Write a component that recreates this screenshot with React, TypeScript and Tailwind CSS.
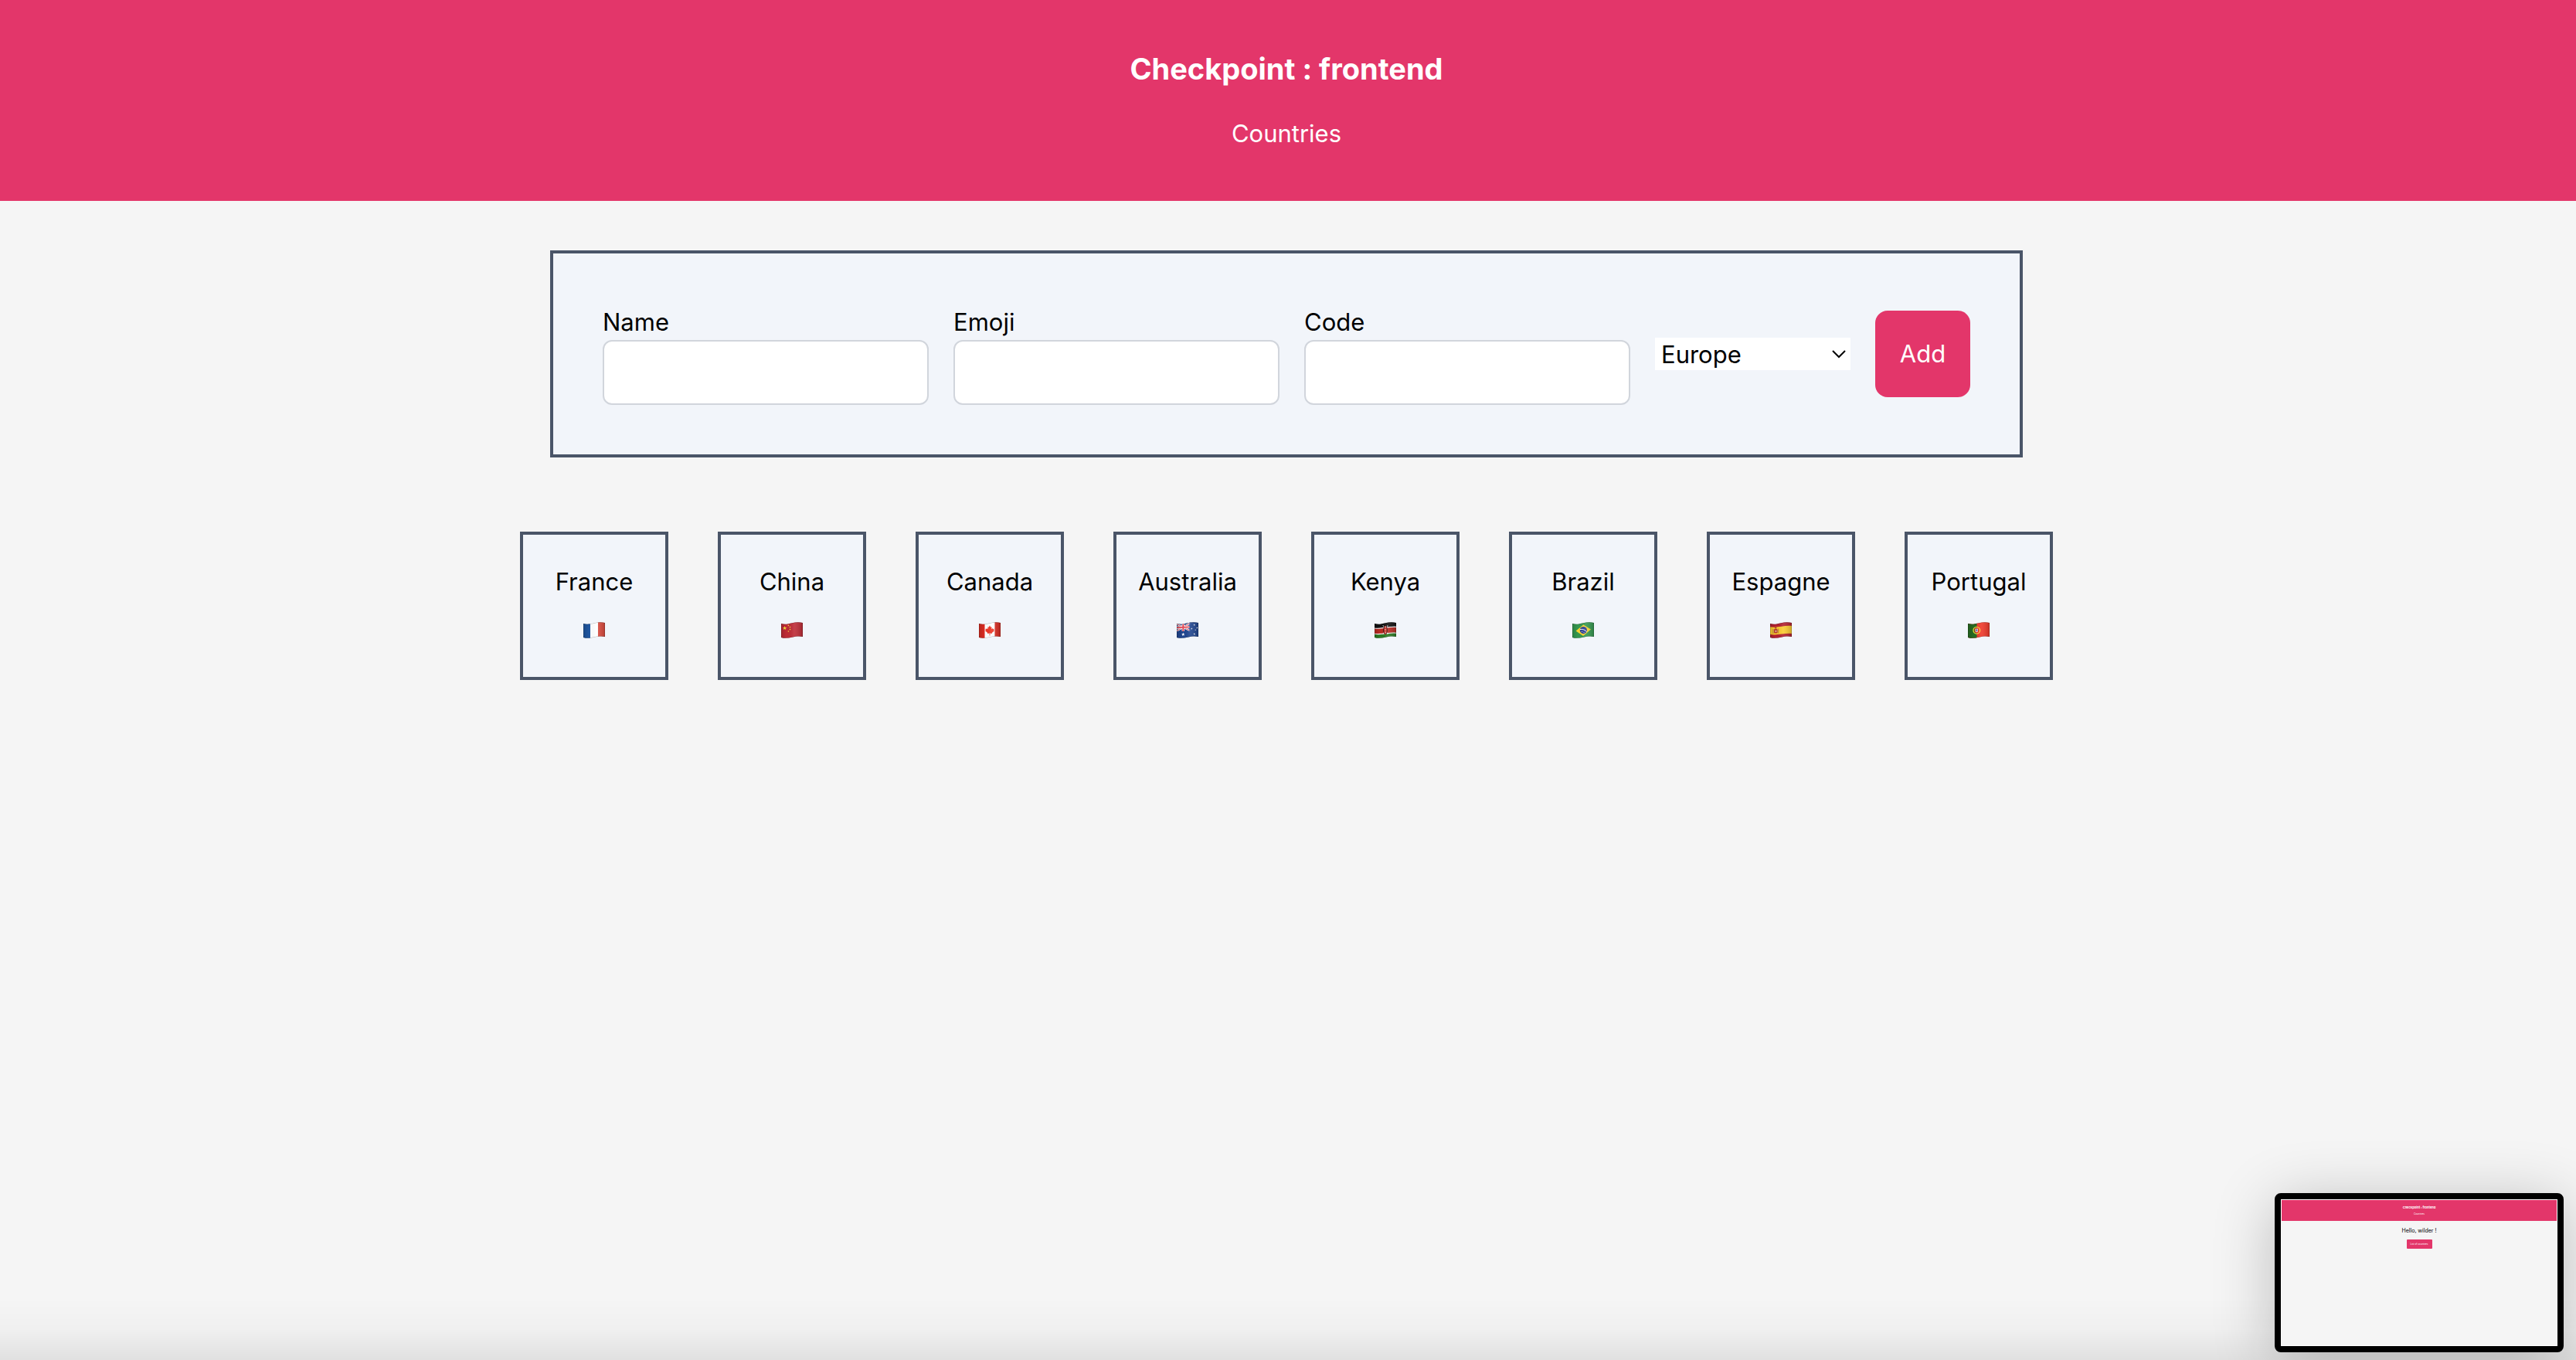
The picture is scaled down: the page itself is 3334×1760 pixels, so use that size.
import { type ReactNode } from "react";

type CountryItem = { name: string; flag: ReactNode };

const STAR = "M0-1 .24-.32 .95-.31 .38 .12 .59 .81 0 .4-.59 .81-.38 .12-.95-.31-.24-.32Z";

/* Outline of a waving flag, 28 x 21 */
const WAVE = "M0 2 C5 3.5 9 2.5 14 1.2 C19 0 24 0 28 1 V19 C24 18 19 18.5 14 19.8 C9 21 4 21.3 0 20 Z";

function Flag({ id, label, children }: { id: string; label: string; children: ReactNode }) {
  return (
    <svg role="img" aria-label={label} width="28" height="21" viewBox="0 0 28 21">
      <defs>
        <clipPath id={id + "-wave"}>
          <path d={WAVE} />
        </clipPath>
        <linearGradient id={id + "-shade"}>
          <stop offset="0" stopColor="#000" stopOpacity=".15" />
          <stop offset=".25" stopColor="#000" stopOpacity="0" />
          <stop offset=".6" stopColor="#fff" stopOpacity=".1" />
          <stop offset="1" stopColor="#000" stopOpacity=".18" />
        </linearGradient>
      </defs>
      <g clipPath={"url(#" + id + "-wave)"}>
        {children}
        <rect width="28" height="21" fill={"url(#" + id + "-shade)"} />
        <path d={WAVE} fill="none" stroke="#000" strokeOpacity=".3" strokeWidth="1" />
      </g>
    </svg>
  );
}

const countries: CountryItem[] = [
  {
    name: "France",
    flag: (
      <Flag id="fr" label="Flag of France">
        <rect width="9" height="21" fill="#1f56a0" />
        <rect x="9" width="10" height="21" fill="#fff" />
        <rect x="19" width="9" height="21" fill="#dc4a3d" />
      </Flag>
    ),
  },
  {
    name: "China",
    flag: (
      <Flag id="cn" label="Flag of China">
        <rect width="28" height="21" fill="#be2b36" />
        <path d={STAR} transform="translate(4.6 7.8) scale(2.8)" fill="#fbe03c" />
        <circle cx="9.4" cy="4.4" r=".8" fill="#f5d33c" />
        <circle cx="11.5" cy="6.6" r=".8" fill="#f5d33c" />
        <circle cx="11.5" cy="9.6" r=".8" fill="#f5d33c" />
        <circle cx="9.4" cy="12" r=".8" fill="#f5d33c" />
      </Flag>
    ),
  },
  {
    name: "Canada",
    flag: (
      <Flag id="ca" label="Flag of Canada">
        <rect width="28" height="21" fill="#fff" />
        <rect width="7.5" height="21" fill="#d92b21" />
        <rect x="20.5" width="7.5" height="21" fill="#d92b21" />
        <path
          d="M14 4.5 15.3 6.8 16.6 6.2 16.2 9.2 17.6 8 18.1 9 19.8 8.8 19.1 10.6 20 11.2 16.8 14 17 15 14.4 14.6V17.5H13.6V14.6L11 15 11.2 14 8 11.2 8.9 10.6 8.2 8.8 9.9 9 10.4 8 11.8 9.2 11.4 6.2 12.7 6.8Z"
          fill="#ee3524"
        />
      </Flag>
    ),
  },
  {
    name: "Australia",
    flag: (
      <Flag id="au" label="Flag of Australia">
        <rect width="28" height="21" fill="#20458f" />
        <path d="M0 2.5 17 11M17 1.5 0 11.5" stroke="#fff" strokeWidth="2.2" />
        <path d="M0 2.5 17 11M17 1.5 0 11.5" stroke="#e34350" strokeWidth=".9" />
        <path d="M8.3 1V12M0 7.2 17 6.4" stroke="#fff" strokeWidth="3.4" />
        <path d="M8.3 1V12M0 7.2 17 6.4" stroke="#e34350" strokeWidth="1.9" />
        <path d="M0 12.3H17V0" stroke="#20458f" strokeWidth="1" fill="none" />
        <path d={STAR} transform="translate(8.3 16) scale(2.4)" fill="#fff" />
        <path d={STAR} transform="translate(22.7 3.7) scale(1.4)" fill="#fff" />
        <path d={STAR} transform="translate(19.3 8.6) scale(1.3)" fill="#fff" />
        <path d={STAR} transform="translate(26.4 7.4) scale(1.3)" fill="#fff" />
        <path d={STAR} transform="translate(22.8 15.4) scale(1.5)" fill="#fff" />
        <circle cx="24.2" cy="10.2" r=".6" fill="#fff" />
      </Flag>
    ),
  },
  {
    name: "Kenya",
    flag: (
      <Flag id="ke" label="Flag of Kenya">
        <path d="M0 0H28V6C19 5 9 9.5 0 8Z" fill="#111" />
        <path d="M0 8C9 9.5 19 5 28 6.5V14C19 13 9 17 0 15Z" fill="#b92a22" />
        <path d="M0 15C9 17 19 13 28 14V21H0Z" fill="#2c7a22" />
        <path d="M0 8C9 9.5 19 5.2 28 6.4M0 15.2C9 17 19 13 28 14.2" stroke="#fff" strokeWidth="1.1" fill="none" />
        <path d="M10.8 4 17.2 16M17.2 4 10.8 16" stroke="#fff" strokeWidth=".7" />
        <ellipse cx="14" cy="10.4" rx="2.7" ry="5.6" fill="#1a1110" />
        <ellipse cx="14" cy="10.4" rx="1.9" ry="5.6" fill="#c8291f" />
        <path d="M14 5.5V15.5" stroke="#fff" strokeWidth=".8" strokeDasharray="2 1.4" />
      </Flag>
    ),
  },
  {
    name: "Brazil",
    flag: (
      <Flag id="br" label="Flag of Brazil">
        <rect width="28" height="21" fill="#35984f" />
        <path d="M4.6 11.4 14.3 3.4 24 9.6 14 18Z" fill="#fbd42f" />
        <circle cx="14.4" cy="10.6" r="4.6" fill="#2a3f94" />
        <path d="M10 9.6C13 8.8 16.5 10 18.6 12.6" stroke="#fff" strokeWidth="1" fill="none" />
        <circle cx="12.5" cy="12.3" r=".5" fill="#fff" />
        <circle cx="15" cy="13.3" r=".5" fill="#fff" />
      </Flag>
    ),
  },
  {
    name: "Espagne",
    flag: (
      <Flag id="es" label="Flag of Spain">
        <rect width="28" height="21" fill="#b3202f" />
        <path d="M0 6.2C9 8 19 3.8 28 5V15C19 14 9 17.6 0 16Z" fill="#fbcb2f" />
        <rect x="5" y="9" width="4.6" height="5.6" rx="1" fill="#b8402f" />
        <rect x="5.9" y="6.6" width="2.6" height="2" rx=".6" fill="#a8442a" />
        <path d="M3.9 9V15M10.7 8.6V14.6" stroke="#a06a4a" strokeWidth=".8" />
        <rect x="6.6" y="11" width="1.6" height="1.6" fill="#e8d8c8" />
      </Flag>
    ),
  },
  {
    name: "Portugal",
    flag: (
      <Flag id="pt" label="Flag of Portugal">
        <rect width="28" height="21" fill="#f0382a" />
        <rect width="11.5" height="21" fill="#276a22" />
        <circle cx="11.3" cy="10.8" r="4.3" fill="none" stroke="#f7e03a" strokeWidth="1.2" />
        <path d="M8.7 7.8H13.9V11.6A2.6 2.6 0 0 1 8.7 11.6Z" fill="#e8322a" />
        <path d="M9.7 8.8H12.9V11.4A1.6 1.6 0 0 1 9.7 11.4Z" fill="#fff" />
        <path d="M11.3 9V12.6M10 10.6H12.6" stroke="#2c4da0" strokeWidth=".8" />
      </Flag>
    ),
  },
];

function Field({ id, label }: { id: string; label: string }) {
  return (
    <div className="flex flex-1 flex-col">
      <label htmlFor={id} className="pt-0.5 leading-[46px]">
        {label}
      </label>
      <input
        id={id}
        type="text"
        className="h-[84px] w-full rounded-xl border-2 border-gray-300 bg-white px-4 outline-none"
      />
    </div>
  );
}

function CountryForm() {
  return (
    <form
      onSubmit={(event) => event.preventDefault()}
      className="flex w-full max-w-[1906px] items-center gap-8 border-4 border-[#4a5568] bg-[#f2f5fa] p-16"
    >
      <Field id="name" label="Name" />
      <Field id="emoji" label="Emoji" />
      <Field id="code" label="Code" />
      <div className="relative w-[253px]">
        <select
          aria-label="Continent"
          defaultValue="Europe"
          className="block h-[42px] w-full appearance-none bg-white pt-0.5 pl-2 leading-[40px] outline-none"
        >
          <option>Europe</option>
        </select>
        <svg
          aria-hidden="true"
          className="pointer-events-none absolute top-4 right-1.5"
          width="18"
          height="11"
          viewBox="0 0 18 11"
          fill="none"
          stroke="#000"
          strokeWidth="2"
        >
          <path d="M1 1 9 9 17 1" />
        </svg>
      </div>
      <button type="submit" className="w-[123px] rounded-2xl bg-[#e3366a] py-8 leading-[48px] text-white">
        Add
      </button>
    </form>
  );
}

function CountryCard({ name, flag }: CountryItem) {
  return (
    <li className="flex size-48 flex-col items-center justify-center gap-[14px] border-4 border-[#4a5568] bg-[#f2f5fa]">
      <span className="leading-[48px]">{name}</span>
      <span className="flex h-12 items-center">{flag}</span>
    </li>
  );
}

function FloatingPreview() {
  return (
    <aside
      aria-label="Window preview"
      className="fixed right-4 bottom-2.5 h-[206px] w-[374px] rounded-lg border-8 border-black bg-black shadow-[0_12px_80px_rgba(0,0,0,0.24)]"
    >
      <div className="flex h-full flex-col items-center border border-white bg-[#f5f5f5]">
        <div className="flex h-[27px] w-full flex-col items-center gap-1 bg-[#e3366a] pt-[7px] text-white">
          <p className="text-[4px] leading-[5px] font-bold">Checkpoint : frontend</p>
          <p className="text-[3px] leading-[5px]">Countries</p>
        </div>
        <p className="mt-2 text-[7px] leading-[10px]">Hello, wilder !</p>
        <a
          href="#countries"
          className="mt-1.5 w-[33px] rounded-[1px] bg-[#e3366a] py-1 text-center text-[3px] leading-[4px] text-white"
        >
          List of countries
        </a>
      </div>
    </aside>
  );
}

export default function App() {
  return (
    <div className="relative min-h-screen bg-[#f5f5f5] font-['Inter',sans-serif] text-[31px] text-black">
      <header className="flex flex-col items-center gap-9 bg-[#e3366a] pt-[65px] pr-1 pb-[63px] text-white">
        <h1 className="text-[38px] leading-[48px] font-bold">Checkpoint : frontend</h1>
        <p className="leading-[48px]">Countries</p>
      </header>
      <main className="flex flex-col items-center gap-24 pt-16 pr-1">
        <CountryForm />
        <ul id="countries" className="flex flex-wrap justify-center gap-16">
          {countries.map((country) => (
            <CountryCard key={country.name} {...country} />
          ))}
        </ul>
      </main>
      <div className="pointer-events-none fixed inset-x-0 bottom-0 h-20 bg-linear-to-b from-transparent via-black/2 to-black/8" />
      <FloatingPreview />
    </div>
  );
}
